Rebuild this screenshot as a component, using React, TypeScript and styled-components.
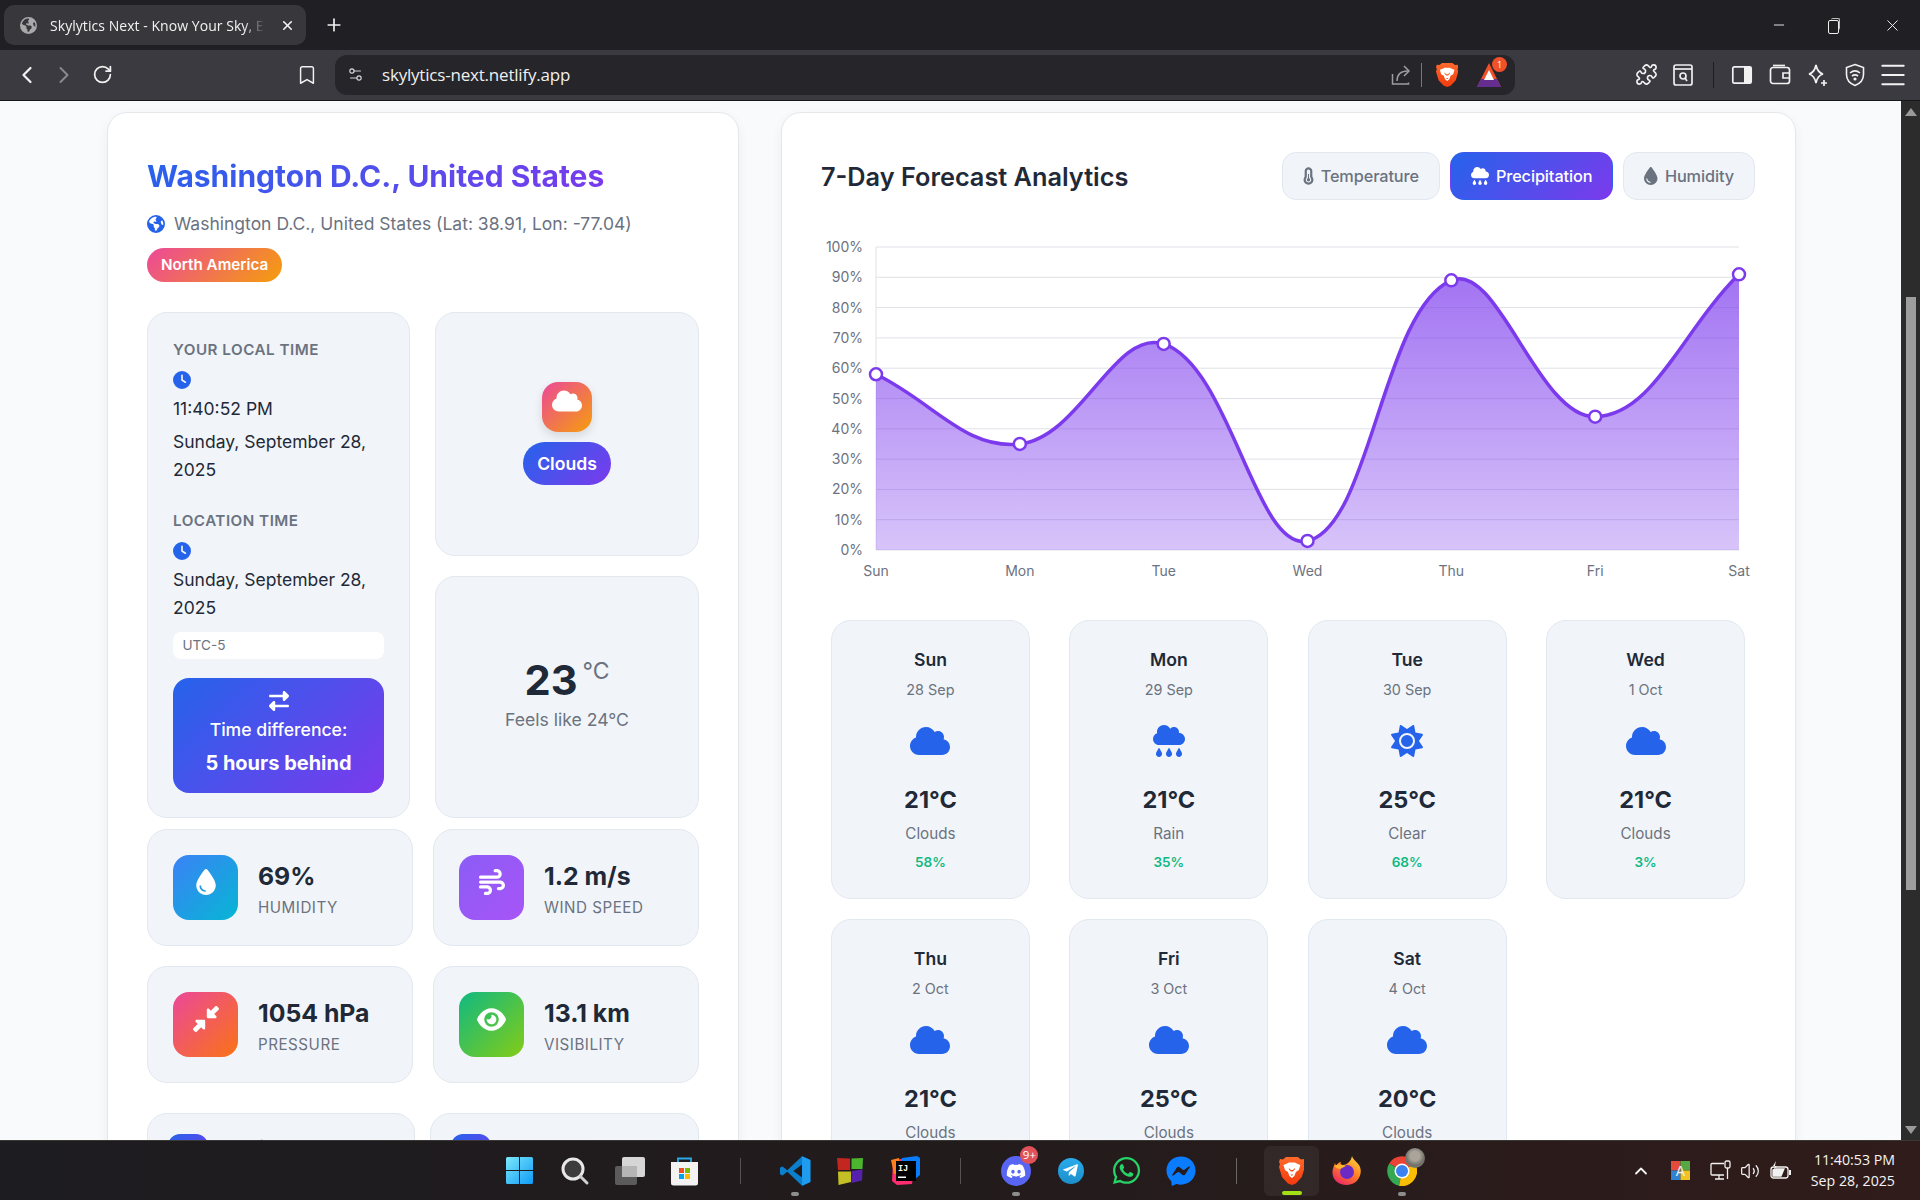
import React from "react";
import styled, { createGlobalStyle } from "styled-components";
import {
  FaEarthAmericas, FaClock, FaRightLeft, FaCloud, FaDroplet, FaWind, FaDownLeftAndUpRightToCenter, FaEye,
  FaTemperatureHalf, FaCloudRain, FaSun, FaMoon,
} from "react-icons/fa6";
import { FaDiscord, FaTelegramPlane, FaWhatsapp, FaFacebookMessenger } from "react-icons/fa";
import { ChevronLeft, ChevronRight, RotateCw, Bookmark, Settings2, Puzzle, Menu, X, Plus, Minus, ChevronUp, Volume2 } from "lucide-react";

const Global = createGlobalStyle`
  html, body { margin: 0; padding: 0; height: 100%; overflow: hidden; background: #f8fafc; }
  #root { height: 100vh; }
  * { box-sizing: border-box; }
`;

const Shell = styled.div`display: flex; flex-direction: column; height: 1200px; font-family: Inter, "Liberation Sans", sans-serif; color: #1f2937;`;

/* ---------- browser chrome ---------- */
const TabStrip = styled.div`height: 50px; flex: none; background: #1f1f24; display: flex; align-items: center; padding-left: 4px; color: #f2f2f2; font-family: "Open Sans", "Liberation Sans", sans-serif;`;
const Tab = styled.div`width: 302px; height: 40px; border-radius: 10px; background: #37373c; display: flex; align-items: center; padding-left: 16px; gap: 13px; position: relative; flex: none;`;
const TabTitle = styled.span`font-size: 14px; width: 215px; white-space: nowrap; overflow: hidden; letter-spacing: 0.05px; -webkit-mask-image: linear-gradient(90deg, #000 90%, transparent); mask-image: linear-gradient(90deg, #000 90%, transparent);`;
const TabClose = styled.span`display: flex; margin-left: 2px;`;
const NewTab = styled.span`display: flex; margin-left: 18px;`;
const WindowControls = styled.div`margin-left: auto; display: flex; align-items: center; padding-right: 18px;`;
const RestoreIcon = styled.span`display: block; width: 16px; height: 16px; margin: 0 42px 0 38px; position: relative; &::before { content: ""; position: absolute; left: 3px; top: 3px; width: 9px; height: 12px; border: 1.3px solid #eee; border-radius: 2px; } &::after { content: ""; position: absolute; left: 6px; top: 1px; width: 8px; height: 11px; border-top: 1.3px solid #bbb; border-right: 1.3px solid #bbb; border-radius: 2px; }`;

const Toolbar = styled.div`height: 51px; flex: none; background: #3a3a40; border-bottom: 1px solid #17171a; display: flex; align-items: center; padding: 0 12px 1px 15px; color: #efefef; font-family: "Open Sans", "Liberation Sans", sans-serif;`;
const NavSlot = styled.span<{ $w: number; $dim?: boolean; $ml?: number }>`display: flex; align-items: center; justify-content: center; flex: none; width: ${(p) => p.$w}px; margin-left: ${(p) => p.$ml ?? 0}px; color: ${(p) => (p.$dim ? "#8a8a8e" : "#f2f2f2")}; svg { flex: none; }`;
const AddressBar = styled.div`width: 1180px; height: 40px; margin-left: 14px; background: #25252a; border-radius: 12px; display: flex; align-items: center; padding: 0 0 0 12px; flex: none; margin-right: 116px;`;
const UrlText = styled.span`font-size: 17px; margin-left: 18px; letter-spacing: -0.2px;`;
const AddressRight = styled.div`margin-left: auto; display: flex; align-items: center; padding-right: 13px;`;
const Divider = styled.span<{ $h?: number; $c?: string; $m?: string }>`display: block; flex: none; width: 1px; height: ${(p) => p.$h ?? 24}px; background: ${(p) => p.$c ?? "#77777c"}; margin: ${(p) => p.$m ?? "0"};`;
const BatWrap = styled.span`position: relative; display: block; width: 26px; height: 26px; margin-left: 18px;`;
const BatBadge = styled.span`position: absolute; top: -5px; right: -5px; width: 15px; height: 15px; border-radius: 50%; background: #f0512a; color: #fff; font-size: 9px; line-height: 15px; text-align: center;`;

/* ---------- page ---------- */
const Viewport = styled.div`flex: 1; min-height: 0; display: flex; overflow: hidden; background: #f8fafc;`;
const PageArea = styled.div`flex: 1; min-width: 0; overflow: hidden; padding: 11px 0 0 107px; display: grid; grid-template-columns: 632px 1015px; column-gap: 42px; align-items: start;`;
const ScrollTrack = styled.div`width: 19px; flex: none; background: #2c2c2c; display: flex; flex-direction: column; align-items: center; position: relative;`;
const ScrollUp = styled.span`width: 0; height: 0; margin-top: 7px; border-left: 6px solid transparent; border-right: 6px solid transparent; border-bottom: 8px solid #9a9a9a;`;
const ScrollThumb = styled.span`width: 10px; height: 593px; margin-top: 181px; background: #9e9e9e;`;
const ScrollDown = styled.span`width: 0; height: 0; margin-top: auto; margin-bottom: 6px; border-left: 6px solid transparent; border-right: 6px solid transparent; border-top: 8px solid #9a9a9a;`;

const Card = styled.section`background: #fff; border: 1px solid #e5e7eb; border-radius: 20px; box-shadow: 0 4px 12px rgba(15,23,42,.05); padding: 39px 39px 40px; min-height: 1300px;`;
const ChartCard = styled(Card)`padding-right: 40px;`;
const Title = styled.h1`margin: 0; font-size: 30px; line-height: 48px; font-weight: 700; width: fit-content; background: linear-gradient(135deg, #2563eb, #7c3aed); -webkit-background-clip: text; background-clip: text; color: transparent;`;
const LocationRow = styled.div`margin-top: 10px; display: flex; align-items: center; gap: 9px; height: 27px; font-size: 17.5px; color: #6b7280; svg { color: #2563eb; }`;
const RegionTag = styled.span`display: block; width: fit-content; margin-top: 11px; height: 34px; line-height: 34px; padding: 0 14px; border-radius: 17px; font-size: 15.2px; font-weight: 600; color: #fff; background: linear-gradient(135deg, #ec4899, #f59e0b);`;
const TopGrid = styled.div`margin-top: 30px; display: grid; grid-template-columns: 263px 264px; grid-template-rows: 244px 242px; gap: 20px 25px;`;
const Panel = styled.div`background: #f1f5f9; border: 1px solid #e2e8f0; border-radius: 20px;`;
const TimePanel = styled(Panel)`grid-row: 1 / span 2; padding: 25px; `;
const TimeLabel = styled.div<{ $top?: number }>`font-size: 15.2px; line-height: 23px; font-weight: 600; letter-spacing: 0.5px; color: #6b7280; text-transform: uppercase; margin-top: ${(p) => p.$top ?? 0}px;`;
const ClockMark = styled.span`display: block; height: 18px; margin: 10px 0 6px; color: #2563eb; svg { display: block; }`;
const TimeText = styled.div<{ $after?: number }>`font-size: 17.5px; line-height: 28px; color: #1f2937; margin-bottom: ${(p) => p.$after ?? 0}px;`;
const OffsetPill = styled.div`margin-top: 10px; height: 27px; line-height: 27px; background: #fff; border-radius: 8px; padding-left: 9.5px; font-size: 13.6px; color: #6b7280;`;
const DiffBox = styled.div`margin-top: 19px; padding: 13px 15px 0; height: 115px; border-radius: 16px; color: #fff; text-align: center; background: linear-gradient(135deg, #2563eb, #7c3aed); svg { display: block; margin: 0 auto 5px; }`;
const DiffLabel = styled.div`font-size: 17.6px; line-height: 28px; font-weight: 500;`;
const DiffValue = styled.div`margin-top: 2.5px; font-size: 20px; line-height: 33px; font-weight: 700;`;
const CenterPanel = styled(Panel)<{ $shift?: number }>`display: flex; flex-direction: column; align-items: center; justify-content: center; padding-bottom: ${(p) => p.$shift ?? 0}px;`;
const CondIcon = styled.div`width: 50px; height: 50px; padding-bottom: 12px; border-radius: 16px; display: flex; align-items: center; justify-content: center; color: #fff; background: linear-gradient(135deg, #ec4899, #f59e0b); box-shadow: 0 4px 10px rgba(0,0,0,.12);`;
const CondBadge = styled.div`margin-top: 10px; height: 43px; line-height: 43px; padding: 0 14.5px; border-radius: 22px; font-size: 17.6px; font-weight: 600; color: #fff; background: linear-gradient(135deg, #2563eb, #7c3aed);`;
const TempLine = styled.div`display: flex; align-items: flex-start; font-weight: 700; font-size: 41.6px; line-height: 40px; color: #1f2937;`;
const TempUnit = styled.span`font-size: 23px; line-height: 22px; font-weight: 400; color: #6b7280; margin-left: 5px;`;
const Feels = styled.div`margin-top: 6px; font-size: 17.6px; line-height: 28px; color: #6b7280;`;
const StatGrid = styled.div`margin-top: 11px; display: grid; grid-template-columns: 1fr 1fr; gap: 20px;`;
const StatCard = styled(Panel)`height: 117px; padding: 25px; display: flex; align-items: center; gap: 20px;`;
const StatIcon = styled.div<{ $bg: string }>`width: 65px; height: 65px; padding-bottom: 11px; flex: none; border-radius: 16px; display: flex; align-items: center; justify-content: center; color: #fff; background: ${(p) => p.$bg};`;
const StatValue = styled.div`font-size: 24.8px; line-height: 38px; font-weight: 700; color: #1f2937;`;
const StatLabel = styled.div`margin-top: 1px; font-size: 15.2px; line-height: 23px; letter-spacing: 0.5px; text-transform: uppercase; color: #6b7280;`;
const SunGrid = styled.div`margin-top: 30px; display: grid; grid-template-columns: 268px 269px; gap: 15px;`;
const SunCard = styled(Panel)`padding: 20px; display: flex; gap: 15px; align-items: flex-start;`;
const SunIcon = styled.div`width: 40px; height: 40px; border-radius: 12px; flex: none; display: flex; align-items: center; justify-content: center; color: #fff; background: linear-gradient(135deg, #2563eb, #7c3aed);`;
const SunLabel = styled.div`margin-top: 3px; font-size: 16px; line-height: 19px; font-weight: 600;`;

const ChartHead = styled.div`display: flex; align-items: center; justify-content: space-between; height: 48px;`;
const ChartTitle = styled.h2`margin: 0; font-size: 25.3px; font-weight: 600; color: #1f2937;`;
const ModeRow = styled.div`display: flex; gap: 10px;`;
const ModeButton = styled.div<{ $active?: boolean; $iconW: number }>`height: 48px; padding: 0 20px; display: flex; align-items: center; gap: 7px; border-radius: 14px; font-size: 16.3px; font-weight: 500; letter-spacing: -0.1px; border: 1px solid ${(p) => (p.$active ? "transparent" : "#e2e8f0")}; color: ${(p) => (p.$active ? "#fff" : "#6b7280")}; background: ${(p) => (p.$active ? "linear-gradient(135deg, #2563eb, #7c3aed)" : "#f1f5f9")}; svg { width: ${(p) => p.$iconW}px; height: 18px; flex: none; }`;
const ChartSvg = styled.svg`display: block; margin-top: 35px; font-family: Inter, "Liberation Sans", sans-serif;`;
const ForecastGrid = styled.div`margin-top: 35px; padding: 0 10px; display: grid; grid-template-columns: repeat(4, 1fr); gap: 20px 39.5px;`;
const DayCard = styled(Panel)`height: 279px; padding-top: 25px; text-align: center;`;
const DayName = styled.div`font-size: 17.6px; line-height: 28px; font-weight: 600; color: #1f2937;`;
const DayDate = styled.div`margin-top: 4px; font-size: 14.4px; line-height: 23px; color: #6b7280;`;
const DayIcon = styled.div`margin-top: 16px; height: 48px; display: flex; align-items: center; justify-content: center; color: #2563eb;`;
const DayTemp = styled.div`margin-top: 17px; font-size: 23.5px; line-height: 36px; font-weight: 700; color: #1f2937;`;
const DayCond = styled.div`margin-top: 4px; font-size: 15.2px; line-height: 23px; color: #6b7280;`;
const DayPop = styled.div`margin-top: 6px; font-size: 13.6px; line-height: 22px; font-weight: 600; color: #10b981;`;

/* ---------- taskbar ---------- */
const Taskbar = styled.div`height: 60px; flex: none; border-top: 1px solid #3a3835; background: linear-gradient(90deg, #1d1c20 0%, #221b1c 50%, #301c1a 100%); display: flex; align-items: center; padding-left: 492px; color: #f2f2f2; font-family: "Open Sans", "Liberation Sans", sans-serif;`;
const Slot = styled.div<{ $active?: boolean }>`width: 55.15px; height: 50px; flex: none; display: flex; align-items: center; justify-content: center; position: relative; border-radius: 6px; background: ${(p) => (p.$active ? "rgba(255,255,255,.06)" : "transparent")};`;
const Dot = styled.span<{ $green?: boolean }>`position: absolute; left: 50%; bottom: ${(p) => (p.$green ? 1 : 0)}px; transform: translateX(-50%); width: ${(p) => (p.$green ? 20 : 8)}px; height: 4px; border-radius: 2px; background: ${(p) => (p.$green ? "#a3e015" : "#8d8d8d")};`;
const Round = styled.span<{ $bg: string; $size?: number }>`width: ${(p) => p.$size ?? 30}px; height: ${(p) => p.$size ?? 30}px; border-radius: 50%; display: flex; align-items: center; justify-content: center; color: #fff; background: ${(p) => p.$bg};`;
const NineBadge = styled.span`position: absolute; right: 5px; top: 0; width: 18px; height: 18px; border-radius: 50%; background: #e0525a; color: #fff; font-size: 11.5px; line-height: 18px; text-align: center;`;
const Avatar = styled.span`position: absolute; right: 4px; top: 2px; width: 20px; height: 20px; border-radius: 50%; background: radial-gradient(circle at 50% 40%, #aaa49a 0 30%, #6f7068 60%, #8c8d84);`;
const Tray = styled.div`margin-left: auto; display: flex; align-items: center; padding-right: 25px;`;
const TrayItem = styled.span<{ $w: number }>`width: ${(p) => p.$w}px; display: flex; align-items: center; justify-content: center; flex: none;`;
const ClockBox = styled.div`margin-left: 13px; padding-bottom: 2px; text-align: right; font-size: 14.2px; line-height: 21px; color: #f4f4f4;`;

/* ---------- drawings ---------- */
const WinLogo = () => (
  <svg width="29" height="29" viewBox="0 0 29 29">
    <defs><linearGradient id="w" x1="0" y1="0" x2="1" y2="1"><stop offset="0" stopColor="#7ce8fb" /><stop offset="1" stopColor="#0f9bf5" /></linearGradient></defs>
    <path d="M1 2.5A1.5 1.5 0 0 1 2.5 1H14v13H1zM15 1h11.500A1.500 1.500 0 0 1 28 2.500V14H15zM1 15h13v13H2.500A1.500 1.500 0 0 1 1 26.500zM15 15h13v11.500a1.500 1.500 0 0 1-1.500 1.500H15z" fill="url(#w)" />
  </svg>
);
const SearchGlyph = () => (
  <svg width="30" height="30" viewBox="0 0 30 30">
    <circle cx="13" cy="13" r="10" fill="#3c3c3c" stroke="#e8e8e8" strokeWidth="3" />
    <path d="M20.500 20.500L27 27" stroke="#cfcfcf" strokeWidth="3" strokeLinecap="round" />
  </svg>
);
const TaskView = () => (
  <svg width="31" height="28" viewBox="0 0 31 28">
    <rect x="1" y="9" width="22" height="19" rx="2" fill="#5b5b5b" />
    <rect x="8" y="0" width="23" height="20" rx="2" fill="#f0f0f0" fillOpacity=".88" />
    <rect x="8" y="9" width="15" height="11" fill="#b5b5b5" />
  </svg>
);
const StoreBag = () => (
  <svg width="29" height="30" viewBox="0 0 29 30">
    <path d="M8 6V2.500h13V6" fill="none" stroke="#2aa8e8" strokeWidth="1.800" />
    <path d="M1 6h27v21a2.500 2.500 0 0 1-2.500 2.500h-22A2.500 2.500 0 0 1 1 27z" fill="#f3f3f3" />
    <rect x="9" y="12" width="5" height="5" fill="#f25022" /><rect x="15" y="12" width="5" height="5" fill="#7fba00" />
    <rect x="9" y="18" width="5" height="5" fill="#00a4ef" /><rect x="15" y="18" width="5" height="5" fill="#ffb900" />
  </svg>
);
const VsCode = () => (
  <svg width="32" height="32" viewBox="0 0 100 100">
    <path d="M72 4L26 48 11 36l-8 4v20l8 4 15-12 46 44 26-12V16zM72 30v40L45 50z" fill="#0b7fcc" fillRule="evenodd" />
    <path d="M72 4l26 12v68L72 96V70V30z" fill="#1f9cf0" />
  </svg>
);
const ColorBlocks = () => (
  <svg width="28" height="30" viewBox="0 0 28 30">
    <path d="M1 2l13 .5V14H2z" fill="#c2261e" /><path d="M15.500 2.500L27 2l-.5 11H15.500z" fill="#4cb52e" />
    <path d="M2 15.500h13V26L2.500 29z" fill="#c3c025" /><path d="M15.500 15l11-1.500-.5 11-10.500 2.500z" fill="#5521ad" />
  </svg>
);
const Intellij = () => (
  <svg width="31" height="30" viewBox="0 0 31 30">
    <path d="M3 5L15 2l10 6-3 20-15 1-5-4z" fill="#ff2d6f" />
    <path d="M1 4l8-2 3 16H4z" fill="#fc801d" />
    <path d="M12 2L27 0l3 2v17l-6 5H12z" fill="#087cfa" />
    <rect x="6" y="5" width="20" height="20" fill="#000" />
    <text x="8" y="15" fontSize="8.500" fontWeight="700" fill="#fff" fontFamily="Liberation Mono, monospace">IJ</text>
    <rect x="8" y="20.500" width="8" height="1.500" fill="#fff" />
  </svg>
);
const BraveLion = ({ size = 30 }: { size?: number }) => (
  <svg width={size * 0.86} height={size} viewBox="0 0 26 30">
    <defs><linearGradient id="b" x1="0" y1="0" x2="0" y2="1"><stop offset="0" stopColor="#ff6a2b" /><stop offset="1" stopColor="#f23a0e" /></linearGradient></defs>
    <path d="M7 1h12l3 2.500L25 3l1 3-1 2 1 3-3 10-6 6.500-4 1.500-4-1.500-6-6.500L0 11l1-3-1-2 1-3 3 .5z" fill="url(#b)" />
    <path d="M7 8l3-1.500h6L19 8l2.500 1L20 14l-3 2-1.500 4L13 22l-2.500-2L9 16l-3-2-1.500-5z" fill="#fff" />
    <path d="M10 12l2 2h2l2-2v1.500l-2 2h-2l-2-2zM11.500 18.500h3L13 20z" fill="#f6511d" />
  </svg>
);
const Firefox = () => (
  <svg width="30" height="30" viewBox="0 0 30 30">
    <defs>
      <linearGradient id="ff" x1="0.8" y1="0" x2="0.2" y2="1"><stop offset="0" stopColor="#ffd53a" /><stop offset=".5" stopColor="#ff7a25" /><stop offset="1" stopColor="#e9246a" /></linearGradient>
    </defs>
    <path d="M20 0c1 4 6 6 8 11 3 8-3 18-13 18S0 23 .5 15C1 12 2 9 3 7l1 3c1-2 3-4 5-4-1 2 0 3 2 3 3 0 8-3 9-9z" fill="url(#ff)" />
    <circle cx="15" cy="16" r="7" fill="#6a2bc4" />
    <path d="M2 10c3-2 8-2 12 0l-6 3c-2 0-4-1-6-3z" fill="#ffb22d" />
  </svg>
);
const Chrome = () => (
  <svg width="30" height="30" viewBox="0 0 30 30">
    <path d="M15 15L2.200 7.500A15 15 0 0 1 28 7.500z" fill="#ea4335" />
    <path d="M15 15L2.200 7.500A15 15 0 0 0 12 29.700z" fill="#34a853" />
    <path d="M15 15L28 7.500A15 15 0 0 1 12 29.700z" fill="#fbbc04" />
    <circle cx="15" cy="15" r="7.500" fill="#fff" /><circle cx="15" cy="15" r="6" fill="#3b82f0" />
  </svg>
);
const ShareGlyph = () => (
  <svg width="22" height="22" viewBox="0 0 22 22" fill="none" stroke="#9d9da1" strokeWidth="1.500">
    <path d="M1.500 10v10h16v-1.500" /><path d="M6 17c0-7 4-10 11-10" /><path d="M13 2l5 5-5 5" />
  </svg>
);
const BatTriangle = () => (
  <svg width="26" height="26" viewBox="0 0 26 26">
    <path d="M13 1L25 25H1z" fill="#f0512a" /><path d="M1 25l4-8h16l4 8z" fill="#662d91" /><path d="M13 8l5 10H8z" fill="#fff" />
  </svg>
);
const ReaderGlyph = () => (
  <svg width="22" height="24" viewBox="0 0 22 24" fill="none" stroke="#efefef" strokeWidth="1.700">
    <rect x="2" y="2" width="18" height="20" rx="2" /><path d="M2 6h18" /><circle cx="11" cy="13" r="3" /><path d="M13 15l2 3" />
  </svg>
);
const SidebarGlyph = () => (
  <svg width="22" height="22" viewBox="0 0 22 22"><rect x="1.800" y="2.800" width="18.400" height="16.400" rx="1.500" fill="none" stroke="#f2f2f2" strokeWidth="1.700" /><rect x="13" y="3" width="7" height="16" fill="#f2f2f2" /></svg>
);
const WalletGlyph = () => (
  <svg width="22" height="22" viewBox="0 0 22 22" fill="none" stroke="#f2f2f2" strokeWidth="1.700">
    <rect x="1.500" y="3.500" width="19" height="16" rx="2.500" /><path d="M4 1.500h12" /><path d="M20.500 9H14v5h6.500" />
  </svg>
);
const LeoGlyph = () => (
  <svg width="24" height="24" viewBox="0 0 24 24" fill="none" stroke="#f2f2f2" strokeWidth="1.700">
    <path d="M11 2c1 5 3 8 7 9-4 1-6 4-7 9-1-5-3-8-7-9 4-1 6-4 7-9z" /><path d="M19 17v6M16 20h6" />
  </svg>
);
const VpnGlyph = () => (
  <svg width="22" height="24" viewBox="0 0 22 24" fill="none" stroke="#f2f2f2" strokeWidth="1.600">
    <path d="M11 1.500l8.500 3v7c0 5-3.500 9-8.500 11-5-2-8.500-6-8.500-11v-7z" /><path d="M6 10c3-2.500 7-2.500 10 0M8 13c2-1.500 4-1.500 6 0" /><circle cx="11" cy="16" r=".8" fill="#f2f2f2" />
  </svg>
);
const ColorA = () => (
  <svg width="19" height="19" viewBox="0 0 19 19">
    <rect width="9.500" height="9.500" fill="#e44b3c" /><rect x="9.500" width="9.500" height="9.500" fill="#55a844" />
    <rect y="9.500" width="9.500" height="9.500" fill="#2f83d0" /><rect x="9.500" y="9.500" width="9.500" height="9.500" fill="#f0c224" />
    <text x="9.500" y="15" textAnchor="middle" fontSize="14" fill="#eee" fontFamily="Liberation Sans, sans-serif">A</text>
  </svg>
);
const NetGlyph = () => (
  <svg width="21" height="21" viewBox="0 0 21 21" fill="none" stroke="#f2f2f2" strokeWidth="1.300">
    <path d="M14 3.500H2a1 1 0 0 0-1 1V14a1 1 0 0 0 1 1h12" /><path d="M5 19h9M9 15v4" /><rect x="15" y="1" width="5" height="7" rx="1.500" /><path d="M17.500 8v11" />
  </svg>
);
const BatteryGlyph = () => (
  <svg width="22" height="19" viewBox="0 0 22 19" fill="none" stroke="#f2f2f2" strokeWidth="1.300">
    <rect x="1" y="6" width="17" height="11" rx="2.500" /><path d="M20 9v5" strokeWidth="2" /><path d="M3 15V9l3-1h8l-3 7z" fill="#f2f2f2" /><path d="M6 0L3 5h4L4 9" fill="#f2f2f2" stroke="none" />
  </svg>
);

/* ---------- data ---------- */
const days = [
  { n: "Sun", d: "28 Sep", i: "cloud", t: "21°C", c: "Clouds", p: "58%" },
  { n: "Mon", d: "29 Sep", i: "rain", t: "21°C", c: "Rain", p: "35%" },
  { n: "Tue", d: "30 Sep", i: "sun", t: "25°C", c: "Clear", p: "68%" },
  { n: "Wed", d: "1 Oct", i: "cloud", t: "21°C", c: "Clouds", p: "3%" },
  { n: "Thu", d: "2 Oct", i: "cloud", t: "21°C", c: "Clouds", p: "" },
  { n: "Fri", d: "3 Oct", i: "cloud", t: "25°C", c: "Clouds", p: "" },
  { n: "Sat", d: "4 Oct", i: "cloud", t: "20°C", c: "Clouds", p: "" },
];
const rainValues = [58, 35, 68, 3, 89, 44, 91];

const Left = 55, Right = 918, Top = 12, Bottom = 315;
const px = (i: number) => Left + (i * (Right - Left)) / 6;
const py = (v: number) => Bottom - (v * (Bottom - Top)) / 100;

function splinePath(values: number[], tension = 0.4) {
  const pts = values.map((v, i) => ({ x: px(i), y: py(v) }));
  const ctrl = pts.map((p, i) => {
    const a = pts[Math.max(i - 1, 0)], b = pts[Math.min(i + 1, pts.length - 1)];
    const d01 = Math.hypot(p.x - a.x, p.y - a.y), d12 = Math.hypot(b.x - p.x, b.y - p.y);
    const sum = d01 + d12 || 1;
    const fa = (tension * d01) / sum, fb = (tension * d12) / sum;
    return { px: p.x - fa * (b.x - a.x), py: p.y - fa * (b.y - a.y), nx: p.x + fb * (b.x - a.x), ny: p.y + fb * (b.y - a.y) };
  });
  let d = `M${pts[0].x} ${pts[0].y}`;
  for (let i = 1; i < pts.length; i++) {
    d += ` C${ctrl[i - 1].nx} ${ctrl[i - 1].ny} ${ctrl[i].px} ${ctrl[i].py} ${pts[i].x} ${pts[i].y}`;
  }
  return d;
}

const Chart = () => {
  const line = splinePath(rainValues);
  const ticks = [0, 10, 20, 30, 40, 50, 60, 70, 80, 90, 100];
  return (
    <ChartSvg width="934" height="350" viewBox="0 0 934 350">
      <defs>
        <linearGradient id="area" gradientUnits="userSpaceOnUse" x1="0" y1={Top} x2="0" y2={Bottom}>
          <stop offset="0" stopColor="#7c3aed" stopOpacity=".75" />
          <stop offset="1" stopColor="#7c3aed" stopOpacity=".3" />
        </linearGradient>
      </defs>
      {ticks.map((t) => (
        <g key={t}>
          <line x1={Left} x2={Right} y1={py(t)} y2={py(t)} stroke="#dfe1e6" strokeWidth="1" />
          <text x={Left - 13} y={py(t) + 5} textAnchor="end" fontSize="14" fill="#6b7280">{t}%</text>
        </g>
      ))}
      <line x1={Left} x2={Left} y1={Top} y2={Bottom} stroke="#dfe1e6" strokeWidth="1" />
      <path d={`${line} L${Right} ${Bottom} L${Left} ${Bottom} Z`} fill="url(#area)" />
      <path d={line} fill="none" stroke="#7c3aed" strokeWidth="3.500" />
      {rainValues.map((v, i) => (
        <circle key={i} cx={px(i)} cy={py(v)} r="6" fill="#fff" stroke="#7c3aed" strokeWidth="2.500" />
      ))}
      {days.map((d, i) => (
        <text key={d.n} x={px(i)} y={341} textAnchor="middle" fontSize="14" fill="#6b7280">{d.n}</text>
      ))}
    </ChartSvg>
  );
};

const DayGlyph = ({ k }: { k: string }) =>
  k === "rain" ? <FaCloudRain size={32} /> : k === "sun" ? <FaSun size={32} /> : <FaCloud size={40} />;

const stats = [
  { v: "69%", l: "Humidity", bg: "linear-gradient(135deg,#3b82f6,#06b6d4)", icon: <FaDroplet size={26} /> },
  { v: "1.2 m/s", l: "Wind Speed", bg: "linear-gradient(135deg,#8b5cf6,#a855f7)", icon: <FaWind size={26} /> },
  { v: "1054 hPa", l: "Pressure", bg: "linear-gradient(135deg,#ec4899,#f97316)", icon: <FaDownLeftAndUpRightToCenter size={26} /> },
  { v: "13.1 km", l: "Visibility", bg: "linear-gradient(135deg,#10b981,#84cc16)", icon: <FaEye size={29} /> },
];

export default function App() {
  return (
    <Shell>
      <Global />
      <TabStrip>
        <Tab>
          <FaEarthAmericas size={17} color="#a9a9ab" />
          <TabTitle>Skylytics Next - Know Your Sky, Every Day</TabTitle>
          <TabClose><X size={15} strokeWidth={2.6} /></TabClose>
        </Tab>
        <NewTab><Plus size={20} strokeWidth={2} /></NewTab>
        <WindowControls>
          <Minus size={16} strokeWidth={1.4} />
          <RestoreIcon />
          <X size={19} strokeWidth={1.2} />
        </WindowControls>
      </TabStrip>
      <Toolbar>
        <NavSlot $w={24}><ChevronLeft size={28} strokeWidth={1.9} /></NavSlot>
        <NavSlot $w={50} $dim><ChevronRight size={28} strokeWidth={1.7} /></NavSlot>
        <NavSlot $w={26}><RotateCw size={21} strokeWidth={2} /></NavSlot>
        <NavSlot $w={28} $ml={178}><Bookmark size={22} strokeWidth={1.6} /></NavSlot>
        <AddressBar>
          <Settings2 size={17} strokeWidth={1.6} color="#d8d8d8" />
          <UrlText>skylytics-next.netlify.app</UrlText>
          <AddressRight>
            <ShareGlyph />
            <Divider $h={24} $m="0 14px 0 8px" />
            <BraveLion size={26} />
            <BatWrap><BatTriangle /><BatBadge>1</BatBadge></BatWrap>
          </AddressRight>
        </AddressBar>
        <NavSlot $w={30}><Puzzle size={23} strokeWidth={1.7} /></NavSlot>
        <NavSlot $w={30} $ml={7}><ReaderGlyph /></NavSlot>
        <Divider $h={26} $c="#1d1d20" $m="0 0 0 15px" />
        <NavSlot $w={30} $ml={13}><SidebarGlyph /></NavSlot>
        <NavSlot $w={30} $ml={8}><WalletGlyph /></NavSlot>
        <NavSlot $w={30} $ml={7}><LeoGlyph /></NavSlot>
        <NavSlot $w={30} $ml={8}><VpnGlyph /></NavSlot>
        <NavSlot $w={30} $ml={8}><Menu size={32} strokeWidth={1.5} /></NavSlot>
      </Toolbar>
      <Viewport>
        <PageArea>
          <Card>
            <Title>Washington D.C., United States</Title>
            <LocationRow><FaEarthAmericas size={18} />Washington D.C., United States (Lat: 38.91, Lon: -77.04)</LocationRow>
            <RegionTag>North America</RegionTag>
            <TopGrid>
              <TimePanel>
                <TimeLabel>Your Local Time</TimeLabel>
                <ClockMark><FaClock size={18} /></ClockMark>
                <TimeText $after={5}>11:40:52 PM</TimeText>
                <TimeText>Sunday, September 28, 2025</TimeText>
                <TimeLabel $top={25}>Location Time</TimeLabel>
                <ClockMark><FaClock size={18} /></ClockMark>
                <TimeText>Sunday, September 28, 2025</TimeText>
                <OffsetPill>UTC-5</OffsetPill>
                <DiffBox>
                  <FaRightLeft size={20} />
                  <DiffLabel>Time difference:</DiffLabel>
                  <DiffValue>5 hours behind</DiffValue>
                </DiffBox>
              </TimePanel>
              <CenterPanel $shift={2}>
                <CondIcon><FaCloud size={30} /></CondIcon>
                <CondBadge>Clouds</CondBadge>
              </CenterPanel>
              <CenterPanel>
                <TempLine>23<TempUnit>°C</TempUnit></TempLine>
                <Feels>Feels like 24°C</Feels>
              </CenterPanel>
            </TopGrid>
            <StatGrid>
              {stats.map((s) => (
                <StatCard key={s.l}>
                  <StatIcon $bg={s.bg}>{s.icon}</StatIcon>
                  <div>
                    <StatValue>{s.v}</StatValue>
                    <StatLabel>{s.l}</StatLabel>
                  </div>
                </StatCard>
              ))}
            </StatGrid>
            <SunGrid>
              <SunCard><SunIcon><FaSun size={20} /></SunIcon><SunLabel>Sunrise</SunLabel></SunCard>
              <SunCard><SunIcon><FaMoon size={20} /></SunIcon><SunLabel>Sunset</SunLabel></SunCard>
            </SunGrid>
          </Card>
          <ChartCard>
            <ChartHead>
              <ChartTitle>7-Day Forecast Analytics</ChartTitle>
              <ModeRow>
                <ModeButton $iconW={11}><FaTemperatureHalf />Temperature</ModeButton>
                <ModeButton $active $iconW={18}><FaCloudRain />Precipitation</ModeButton>
                <ModeButton $iconW={13.5}><FaDroplet />Humidity</ModeButton>
              </ModeRow>
            </ChartHead>
            <Chart />
            <ForecastGrid>
              {days.map((d) => (
                <DayCard key={d.n}>
                  <DayName>{d.n}</DayName>
                  <DayDate>{d.d}</DayDate>
                  <DayIcon><DayGlyph k={d.i} /></DayIcon>
                  <DayTemp>{d.t}</DayTemp>
                  <DayCond>{d.c}</DayCond>
                  <DayPop>{d.p}</DayPop>
                </DayCard>
              ))}
            </ForecastGrid>
          </ChartCard>
        </PageArea>
        <ScrollTrack><ScrollUp /><ScrollThumb /><ScrollDown /></ScrollTrack>
      </Viewport>
      <Taskbar>
        <Slot><WinLogo /></Slot>
        <Slot><SearchGlyph /></Slot>
        <Slot><TaskView /></Slot>
        <Slot><StoreBag /></Slot>
        <Slot><Divider $h={26} $c="#55534f" /></Slot>
        <Slot><VsCode /><Dot /></Slot>
        <Slot><ColorBlocks /></Slot>
        <Slot><Intellij /></Slot>
        <Slot><Divider $h={26} $c="#55534f" /></Slot>
        <Slot><Round $bg="#5865f2"><FaDiscord size={20} /></Round><NineBadge>9+</NineBadge><Dot /></Slot>
        <Slot><Round $bg="linear-gradient(180deg,#2aabee,#1c8fc9)" $size={26}><FaTelegramPlane size={17} /></Round></Slot>
        <Slot><FaWhatsapp size={31} color="#25d366" /></Slot>
        <Slot><FaFacebookMessenger size={30} color="#0a7cff" /></Slot>
        <Slot><Divider $h={26} $c="#6b6764" /></Slot>
        <Slot $active><BraveLion size={30} /><Dot $green /></Slot>
        <Slot><Firefox /></Slot>
        <Slot><Chrome /><Avatar /><Dot /></Slot>
        <Tray>
          <TrayItem $w={30}><ChevronUp size={20} strokeWidth={2.2} /></TrayItem>
          <TrayItem $w={50}><ColorA /></TrayItem>
          <TrayItem $w={30}><NetGlyph /></TrayItem>
          <TrayItem $w={28}><Volume2 size={20} strokeWidth={1.5} /></TrayItem>
          <TrayItem $w={34}><BatteryGlyph /></TrayItem>
          <ClockBox>11:40:53 PM<br />Sep 28, 2025</ClockBox>
        </Tray>
      </Taskbar>
    </Shell>
  );
}
